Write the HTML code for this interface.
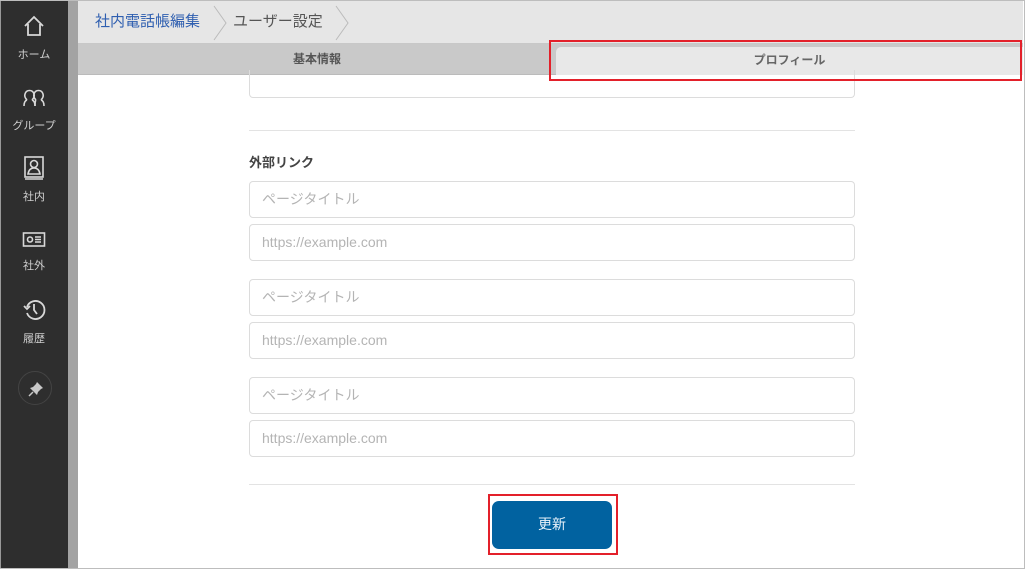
<!DOCTYPE html>
<html><head><meta charset="utf-8"><style>
*{box-sizing:border-box;margin:0;padding:0}
body{width:1025px;height:569px;overflow:hidden;background:#fff;font-family:"Liberation Sans","Noto Sans CJK JP",sans-serif;position:relative}
.frame{position:absolute;left:0;top:0;width:1025px;height:569px;border:1px solid #bdbdbd;border-left:none}
.side{position:absolute;left:0;top:0;width:68px;height:569px;background:#2e2e2e;border-left:1px solid #999}
.strip{position:absolute;left:68px;top:0;width:10px;height:569px;background:#a3a3a3}
.nav{position:absolute;left:0;width:68px;text-align:center;color:#d0d0d0;font-size:11px}
.nav svg{display:block;margin:0 auto 8px}
.head{position:absolute;left:78px;top:1px;width:945px;height:43px;background:#e6e6e6;border-bottom:1px solid #c8c8c8}
.bc{position:absolute;top:9px;font-size:15px}
.tabs{position:absolute;left:78px;top:44px;width:945px;height:31px;background:#c9c9c9;border-bottom:1px solid #bbb}
.tab1{position:absolute;left:0;top:0;width:478px;height:31px;text-align:center;line-height:30px;font-size:12px;font-weight:bold;color:#555}
.tab2{position:absolute;left:478px;top:3px;width:467px;height:28px;background:#e8e8e8;border-radius:5px 0 0 0;text-align:center;line-height:26px;font-size:12px;font-weight:bold;color:#666}
.inp{position:absolute;left:249px;width:606px;height:37px;border:1px solid #dcdcdc;border-radius:4px;color:#b4b4b4;font-size:14px;line-height:35px;padding-left:12px}
.hr{position:absolute;left:249px;width:606px;height:1px;background:#e3e3e3}
.red{position:absolute;border:2px solid #e3202a}
.btn{position:absolute;left:492px;top:501px;width:120px;height:48px;background:#0162a0;border-radius:7px;color:#e8f2fa;font-size:14px;text-align:center;line-height:46px}
</style></head><body>
<div class="side"></div>
<div class="strip"></div>
<div class="nav" style="top:14px"><svg width="24" height="24" viewBox="0 0 24 24" fill="none" stroke="#d8d8d8" stroke-width="1.8"><path d="M3 12 L12 3 L21 12 M6 10 V21 H18 V10"/></svg>ホーム</div>
<div class="nav" style="top:89px"><svg width="24" height="20" viewBox="0 0 24 20" fill="none" stroke="#d8d8d8" stroke-width="1.6"><path d="M5 11 Q2 8 3 5 Q4 1.5 7.5 1.5 Q11 1.5 12 5 Q13 8 10 11 M2 17 Q2 12 5 11 M10 11 Q13 12 13 17"/><path d="M14 11 Q11 8 12 5 Q13 1.5 16.5 1.5 Q20 1.5 21 5 Q22 8 19 11 M13 17 Q13 12 14 11 M19 11 Q22 12 22 17"/></svg>グループ</div>
<div class="nav" style="top:156px"><svg width="22" height="24" viewBox="0 0 22 24" fill="none" stroke="#d8d8d8" stroke-width="1.6"><rect x="2" y="1" width="18" height="20"/><path d="M2 23 H20"/><circle cx="11" cy="8" r="3.5"/><path d="M5 18 Q6 12 11 12 Q16 12 17 18 Z"/></svg>社内</div>
<div class="nav" style="top:231px"><svg width="24" height="18" viewBox="0 0 24 18" fill="none" stroke="#d8d8d8" stroke-width="1.6"><rect x="1.5" y="2" width="21" height="13"/><circle cx="8" cy="8.5" r="2.5"/><path d="M13 6 H19 M13 8.5 H19 M13 11 H19"/></svg>社外</div>
<div class="nav" style="top:298px"><svg width="24" height="24" viewBox="0 0 24 24" fill="none" stroke="#d8d8d8" stroke-width="1.8"><path d="M5 9 A9 9 0 1 1 5 15"/><path d="M2 8 L5 11 L8 8" /><path d="M12 6 V12 L15 16"/></svg>履歴</div>
<div style="position:absolute;left:18px;top:371px;width:34px;height:34px;border-radius:50%;border:1px solid #444"><svg style="position:absolute;left:9px;top:9px" width="16" height="16" viewBox="0 0 16 16"><path d="M9 1 L15 7 L13 8 L10 11 L9 14 L2 7 L5 6 L8 3 Z" fill="#c8c8c8"/><path d="M5 11 L1 15" stroke="#c8c8c8" stroke-width="1.5"/></svg></div>
<div class="head">
<div class="bc" style="left:17px;color:#2f5fb0">社内電話帳編集</div>
<svg style="position:absolute;left:134px;top:4px" width="16" height="36"><path d="M2 1 L14 18 L2 35" fill="none" stroke="#bbb" stroke-width="1"/></svg>
<div class="bc" style="left:155px;color:#555">ユーザー設定</div>
<svg style="position:absolute;left:256px;top:4px" width="16" height="36"><path d="M2 1 L14 18 L2 35" fill="none" stroke="#bbb" stroke-width="1"/></svg>
</div>
<div class="tabs"><div class="tab1">基本情報</div><div class="tab2">プロフィール</div></div>
<div style="position:absolute;left:249px;top:70px;width:606px;height:28px;border:1px solid #dcdcdc;border-top:none;border-radius:0 0 4px 4px"></div>
<div class="hr" style="top:130px"></div>
<div style="position:absolute;left:249px;top:152px;font-size:13px;font-weight:bold;color:#444">外部リンク</div>
<div class="inp" style="top:181px">ページタイトル</div>
<div class="inp" style="top:224px">https://example.com</div>
<div class="inp" style="top:279px">ページタイトル</div>
<div class="inp" style="top:322px">https://example.com</div>
<div class="inp" style="top:377px">ページタイトル</div>
<div class="inp" style="top:420px">https://example.com</div>
<div class="hr" style="top:484px"></div>
<div class="btn">更新</div>
<div class="red" style="left:549px;top:40px;width:473px;height:41px"></div>
<div class="red" style="left:488px;top:494px;width:130px;height:61px"></div>
<div class="frame"></div>
</body></html>
